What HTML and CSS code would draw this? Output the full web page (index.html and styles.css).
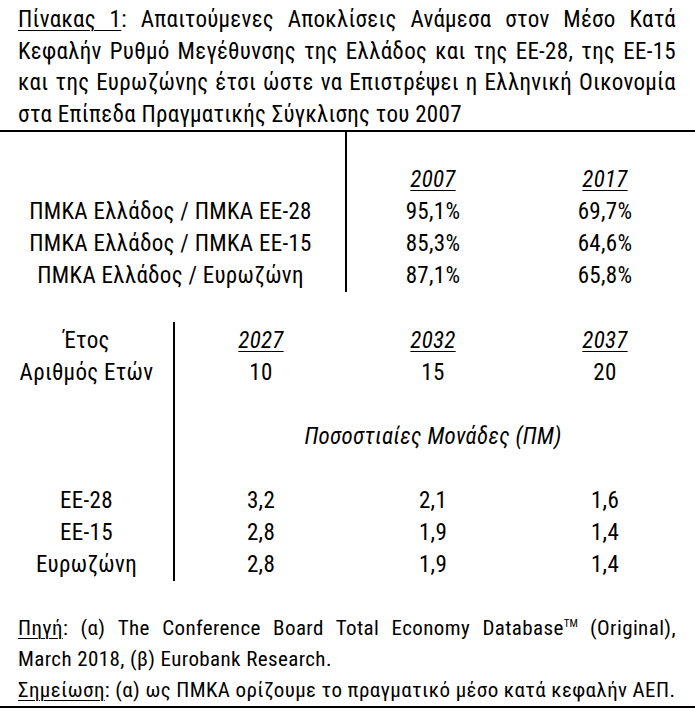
FILE: index.html
```html
<!DOCTYPE html>
<html lang="el">
<head>
<meta charset="utf-8">
<title>Πίνακας 1</title>
<link rel="stylesheet" href="styles.css">
</head>
<body>
<div class="page">
  <p class="title">
    <span class="jline"><span class="ul">Πίνακας 1</span>: Απαιτούμενες Αποκλίσεις Ανάμεσα στον Μέσο Κατά</span>
    <span class="jline">Κεφαλήν Ρυθμό Μεγέθυνσης της Ελλάδος και της ΕΕ-28, της ΕΕ-15</span>
    <span class="jline">και της Ευρωζώνης έτσι ώστε να Επιστρέψει η Ελληνική Οικονομία</span>
    <span class="lline">στα Επίπεδα Πραγματικής Σύγκλισης του 2007</span>
  </p>

  <div class="t1">
    <div class="lab"></div><div></div><div></div>
    <div class="lab"></div><div class="yr">2007</div><div class="yr">2017</div>
    <div class="lab">ΠΜΚΑ Ελλάδος / ΠΜΚΑ ΕΕ-28</div><div>95,1%</div><div>69,7%</div>
    <div class="lab">ΠΜΚΑ Ελλάδος / ΠΜΚΑ ΕΕ-15</div><div>85,3%</div><div>64,6%</div>
    <div class="lab">ΠΜΚΑ Ελλάδος / Ευρωζώνη</div><div>87,1%</div><div>65,8%</div>
  </div>

  <div class="t2">
    <div class="lab hd">Έτος</div><div class="yr hd">2027</div><div class="yr hd">2032</div><div class="yr hd">2037</div>
    <div class="lab">Αριθμός Ετών</div><div>10</div><div>15</div><div>20</div>
    <div class="lab"></div><div class="span"></div>
    <div class="lab"></div><div class="span it">Ποσοστιαίες Μονάδες (ΠΜ)</div>
    <div class="lab"></div><div class="span"></div>
    <div class="lab">ΕΕ-28</div><div>3,2</div><div>2,1</div><div>1,6</div>
    <div class="lab">ΕΕ-15</div><div>2,8</div><div>1,9</div><div>1,4</div>
    <div class="lab">Ευρωζώνη</div><div>2,8</div><div>1,9</div><div>1,4</div>
  </div>

  <div class="notes">
    <span class="jline"><span class="ul">Πηγή</span>: (α) The Conference Board Total Economy Database<sup class="tm">TM</sup> (Original),</span>
    <span class="lline">March 2018, (β) Eurobank Research.</span>
    <span class="lline"><span class="ul">Σημείωση</span>: (α) ως ΠΜΚΑ ορίζουμε το πραγματικό μέσο κατά κεφαλήν ΑΕΠ.</span>
  </div>
</div>
</body>
</html>
```
FILE: styles.css
```css
html, body {
  margin: 0;
  padding: 0;
  background: #fff;
}
.page {
  width: 695px;
  font-family: "Roboto Condensed", "Open Sans", sans-serif;
  font-size: 23px;
  letter-spacing: 0.3px;
  color: #000;
}
.title {
  margin: 0;
  padding: 4px 19px 0 18px;
  line-height: 31.5px;
}
.jline {
  display: block;
  text-align: justify;
  text-align-last: justify;
  white-space: nowrap;
}
.lline {
  display: block;
  text-align: left;
  white-space: nowrap;
}
.ul {
  text-decoration: underline;
  text-decoration-thickness: 1px;
  text-underline-offset: 3px;
}
.t1 {
  border-top: 2px solid #000;
  display: grid;
  grid-template-columns: 347px 172px 172px;
  grid-auto-rows: 32px;
  line-height: 32px;
  text-align: center;
}
.lab {
  border-right: 2px solid #000;
  padding-right: 4px;
  text-align: center;
}
.yr {
  font-style: italic;
  text-decoration: underline;
  text-decoration-thickness: 1px;
  text-underline-offset: 3px;
}
.t2 {
  margin-top: 30px;
  display: grid;
  grid-template-columns: 175px 172px 172px 172px;
  grid-template-rows: 35px;
  grid-auto-rows: 32px;
  line-height: 32px;
  text-align: center;
}
.t2 .lab {
  padding-right: 0;
}
.t2 .hd {
  padding-top: 3px;
}
.span {
  grid-column: 2 / 5;
}
.it {
  font-style: italic;
}
.notes {
  margin-top: 32px;
  padding: 0 19px 0 18px;
  font-size: 21px;
  letter-spacing: 0.4px;
  line-height: 31px;
  border-bottom: 2px solid #000;
}
.tm {
  font-size: 11px;
  line-height: 0;
  vertical-align: 8px;
  letter-spacing: 0;
}
```
